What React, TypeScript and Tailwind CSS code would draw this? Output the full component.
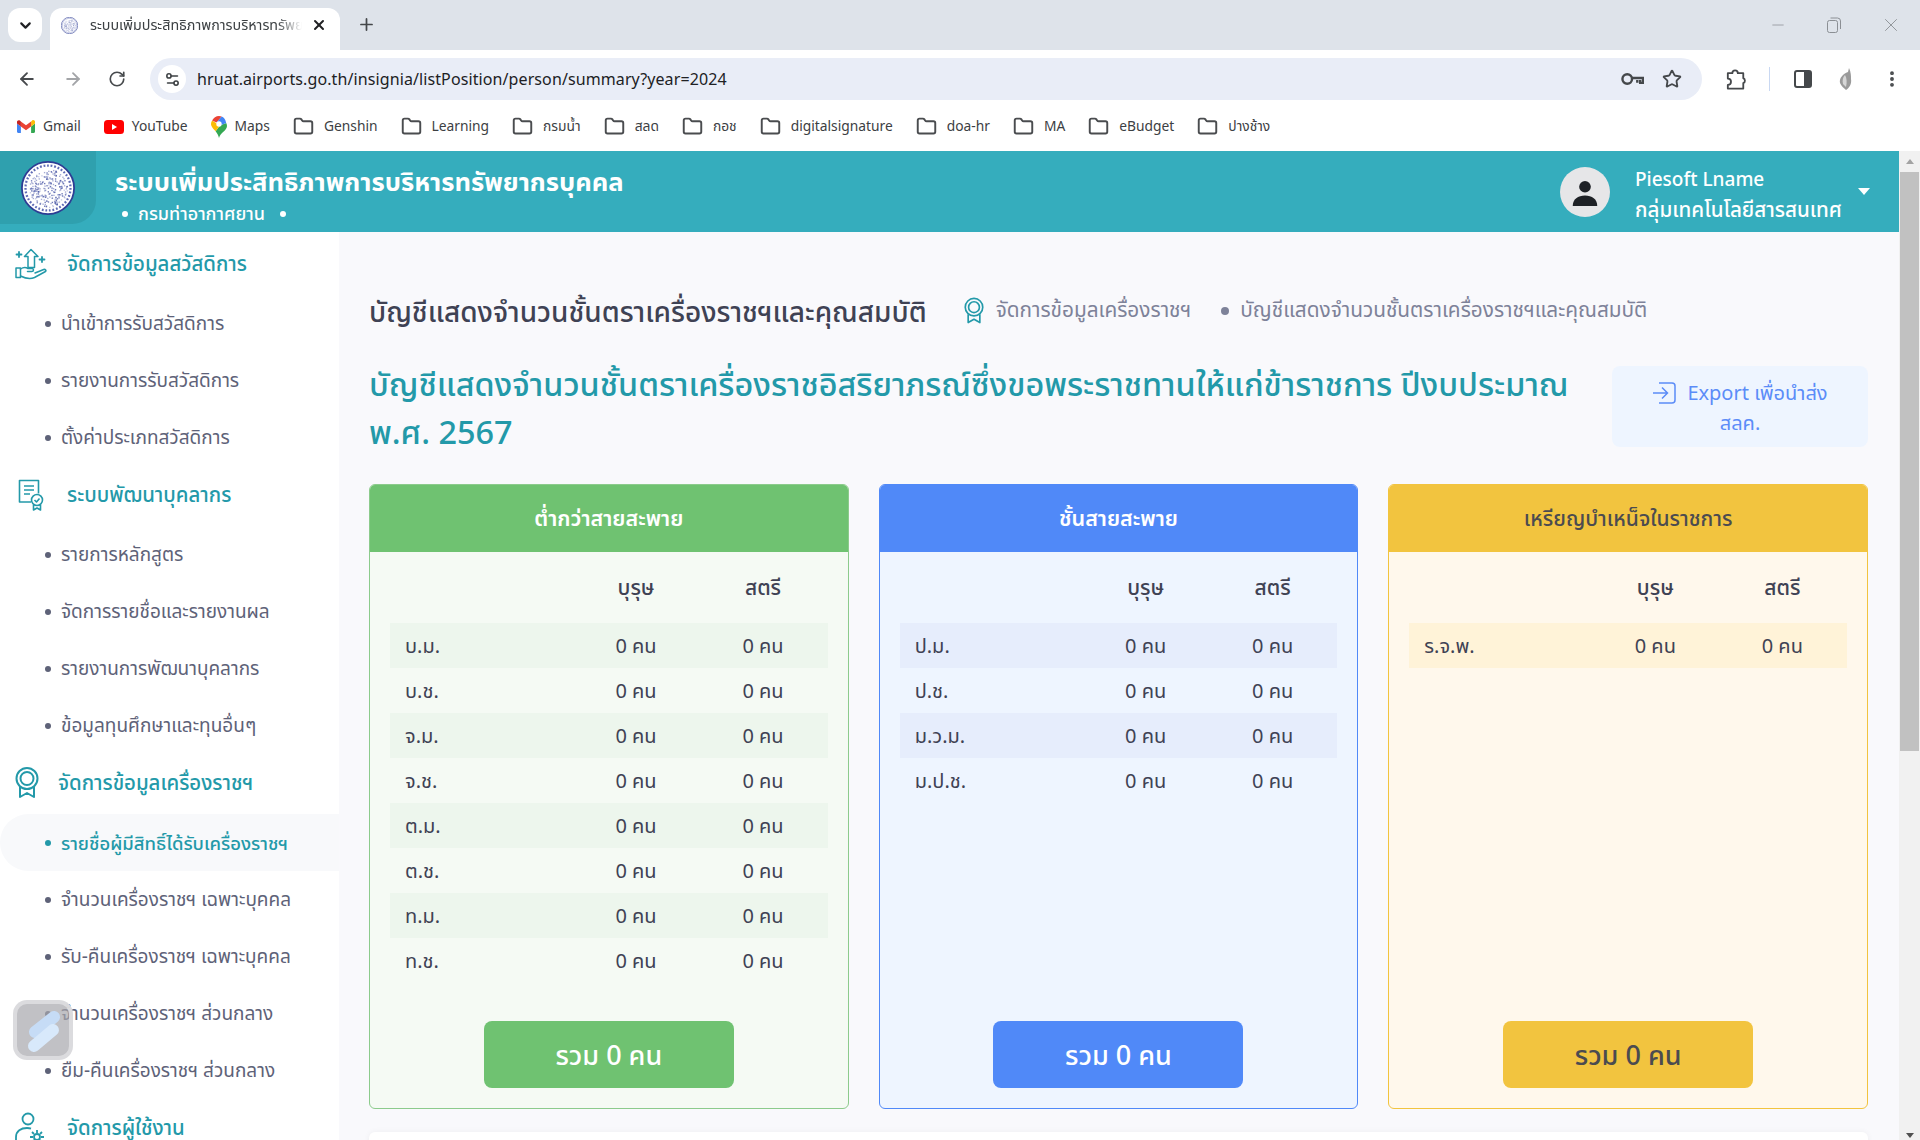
import type { ReactNode } from "react";
import {
  ArrowLeft,
  ArrowRight,
  ChevronDown,
  Folder,
  Minus,
  MoreVertical,
  Plus,
  RotateCw,
  Settings2,
  Star,
  X,
} from "lucide-react";

const TEAL = "#2399a9";

function GmailIcon() {
  return (
    <svg viewBox="0 0 24 24" className="w-[18px] h-[18px]">
      <path fill="#4285F4" d="M1.6 20h3.6v-8.8L0 7.3v11.1C0 19.3.7 20 1.6 20z" />
      <path fill="#34A853" d="M18.8 20h3.6c.9 0 1.6-.7 1.6-1.6V7.3l-5.2 3.9z" />
      <path fill="#FBBC04" d="M18.8 4.5v6.7L24 7.3V5.2c0-2-2.2-3.1-3.8-1.9z" />
      <path fill="#EA4335" d="M5.2 11.2V4.5L12 9.6l6.8-5.1v6.7L12 16.3z" />
      <path fill="#C5221F" d="M0 5.2v2.1l5.2 3.9V4.5L3.8 3.4C2.2 2.2 0 3.3 0 5.2z" />
    </svg>
  );
}

function YoutubeIcon() {
  return (
    <svg viewBox="0 0 20 14" className="w-5 h-[14px]">
      <rect width="20" height="14" rx="3.5" fill="#f00" />
      <path d="M8 4l5 3-5 3z" fill="#fff" />
    </svg>
  );
}

function MapsIcon() {
  return (
    <svg viewBox="0 0 16 22" className="w-4 h-[22px]">
      <path fill="#34A853" d="M8 22c-.6-3-2-5-3.4-6.8L9 9.5l6.2-2.6c.5 1.2.8 1.9.8 3.1 0 4.5-6.8 6.800-8 12z" />
      <path fill="#FBBC04" d="M4.600 15.200C3 13.300 0 11 0 8c0-1.300.4-2.500 1.100-3.500L9 9.500z" />
      <path fill="#EA4335" d="M1.100 4.500C2.500 1.800 5 0 8 0c1 0 1.900.2 2.700.6L5.500 6.500z" />
      <path fill="#4285F4" d="M10.700.6c2 .8 3.600 2.300 4.500 6.300L9 9.500a3 3 0 0 0-3.500-3z" />
      <circle cx="8" cy="8" r="2.700" fill="#fff" />
    </svg>
  );
}

// pseudo random 0..1 so the seal looks the same on every render
const noise = (n: number) => {
  const v = Math.sin(n * 12.9898) * 43758.5453;
  return v - Math.floor(v);
};

// วงกลมตราสัญลักษณ์ จุดเล็กๆ แทนลายในตรา
function Seal({ className }: { className: string }) {
  const dots = [];
  for (let i = 0; i < 240; i++) {
    const a = noise(i + 1) * Math.PI * 2;
    const r = 21 * Math.sqrt(noise(i + 500));
    dots.push(
      <rect
        key={i}
        x={30 + r * Math.cos(a)}
        y={30 + r * Math.sin(a)}
        width="1.500"
        height="1.500"
        fill={i % 3 === 0 ? "#8d97cc" : "#4a58a6"}
        opacity={i % 2 === 0 ? 0.5 : 0.8}
      />
    );
  }
  return (
    <svg viewBox="0 0 60 60" className={className}>
      <circle cx="30" cy="30" r="29" fill="#fff" stroke="#2e3d94" strokeWidth="2" />
      <circle cx="30" cy="30" r="25" fill="none" stroke="#5f6bb5" strokeWidth="2.500" strokeDasharray="2 2" />
      {dots}
    </svg>
  );
}

function MedalIcon({ className }: { className: string }) {
  return (
    <svg viewBox="0 0 24 31" fill="none" stroke={TEAL} strokeWidth="2" className={className}>
      <circle cx="12" cy="11.500" r="10.500" />
      <circle cx="12" cy="11.500" r="6.500" />
      <path d="M5 20v10l7-4 7 4V20" strokeLinejoin="round" />
    </svg>
  );
}

function HandIcon() {
  return (
    <svg viewBox="0 0 32 32" fill="none" stroke={TEAL} strokeWidth="1.500" strokeLinejoin="round" strokeLinecap="round" className="w-8 h-8">
      <path d="M16 1.500 9.500 8.500h3.500v11h6.500v-11H23z" />
      <path d="M1 20h4.500v9.500H1z" />
      <path d="M5.500 21c3-2 5-2 7.500-.5h4c2 0 2 3-.2 3h-4.300M5.500 28c5 2.500 10 3.200 14 1.500l11-6c1.200-1-.2-2.500-1.800-2l-8.700 3.500" />
      <path d="M4 4v5M1.500 6.500h5M27 9v5M24.500 11.500h5" strokeWidth="1.800" />
    </svg>
  );
}

function CertIcon() {
  return (
    <svg viewBox="0 0 26 32" fill="none" stroke={TEAL} strokeWidth="1.600" strokeLinejoin="round" className="ml-[3px] w-[26px] h-8">
      <path d="M13 23H1.500V1.500h19v13" />
      <path d="M6 7h10M6 11h10M6 15h6" />
      <circle cx="19" cy="21" r="5.500" />
      <path d="M16.500 21l2 2 3-3.500M15.500 26v5l3.500-2 3.500 2v-5" />
    </svg>
  );
}

function UserGearIcon() {
  return (
    <svg viewBox="0 0 30 32" fill="none" stroke={TEAL} strokeWidth="1.800" className="w-[30px] h-8">
      <circle cx="13" cy="7" r="5.500" />
      <path d="M1 31v-6c0-6 5-9 11-9 1.500 0 3 .2 4 .6" />
      <circle cx="22" cy="25" r="3" />
      <path d="M22 18v3M22 29v3M15 25h3M26 25h3M17 20l2 2M25 28l2 2M27 20l-2 2M19 28l-2 2" />
    </svg>
  );
}

const bookmarks: { label: string; icon?: ReactNode }[] = [
  { label: "Gmail", icon: <GmailIcon /> },
  { label: "YouTube", icon: <YoutubeIcon /> },
  { label: "Maps", icon: <MapsIcon /> },
  { label: "Genshin" },
  { label: "Learning" },
  { label: "กรมน้ำ" },
  { label: "สลด" },
  { label: "กอช" },
  { label: "digitalsignature" },
  { label: "doa-hr" },
  { label: "MA" },
  { label: "eBudget" },
  { label: "ปางช้าง" },
];

const menu: { title: string; icon: ReactNode; indent?: boolean; items: string[] }[] = [
  {
    title: "จัดการข้อมูลสวัสดิการ",
    icon: <HandIcon />,
    items: ["นำเข้าการรับสวัสดิการ", "รายงานการรับสวัสดิการ", "ตั้งค่าประเภทสวัสดิการ"],
  },
  {
    title: "ระบบพัฒนาบุคลากร",
    icon: <CertIcon />,
    items: ["รายการหลักสูตร", "จัดการรายชื่อและรายงานผล", "รายงานการพัฒนาบุคลากร", "ข้อมูลทุนศึกษาและทุนอื่นๆ"],
  },
  {
    title: "จัดการข้อมูลเครื่องราชฯ",
    icon: <MedalIcon className="w-6 h-[31px]" />,
    indent: true,
    items: [
      "รายชื่อผู้มีสิทธิ์ได้รับเครื่องราชฯ",
      "จำนวนเครื่องราชฯ เฉพาะบุคคล",
      "รับ-คืนเครื่องราชฯ เฉพาะบุคคล",
      "จำนวนเครื่องราชฯ ส่วนกลาง",
      "ยืม-คืนเครื่องราชฯ ส่วนกลาง",
    ],
  },
  { title: "จัดการผู้ใช้งาน", icon: <UserGearIcon />, items: [] },
];

const cards = [
  {
    title: "ต่ำกว่าสายสะพาย",
    rows: ["บ.ม.", "บ.ช.", "จ.ม.", "จ.ช.", "ต.ม.", "ต.ช.", "ท.ม.", "ท.ช."],
    head: "bg-[#6fc271] text-white text-[21.5px] font-semibold",
    body: "bg-[#f5faf4] border-[#8ccb8c]",
    stripe: "bg-[#edf6ed]",
    button: "bg-[#6fc271] text-white",
  },
  {
    title: "ชั้นสายสะพาย",
    rows: ["ป.ม.", "ป.ช.", "ม.ว.ม.", "ม.ป.ช."],
    head: "bg-[#5089f8] text-white text-[21.5px] font-semibold",
    body: "bg-[#eef5ff] border-[#5089f8]",
    stripe: "bg-[#e6edfc]",
    button: "bg-[#5089f8] text-white",
  },
  {
    title: "เหรียญบำเหน็จในราชการ",
    rows: ["ร.จ.พ."],
    head: "bg-[#f2c43f] text-[#4b4b50] text-[21px] font-medium",
    body: "bg-[#fff8ec] border-[#f2c43f]",
    stripe: "bg-[#fff3d8]",
    button: "bg-[#f2c43f] text-[#4b4b50]",
  },
];

function BrowserChrome() {
  return (
    <>
      {/* Tab strip */}
      <div className="h-[50px] bg-[#dee3ea] flex items-end pl-2 relative shrink-0">
        <div className="w-[34px] h-[34px] mb-2 bg-white rounded-xl flex items-center justify-center">
          <ChevronDown size={17} strokeWidth={3} className="text-[#202124]" />
        </div>
        <div className="ml-2 w-[290px] h-[42px] pb-[8px] bg-white rounded-t-xl flex items-center pl-[11px] pr-[13px]">
          <Seal className="w-[17px] h-[17px]" />
          <span className="ml-[12px] w-[212px] overflow-hidden whitespace-nowrap text-[14.300px] text-[#3c4043] [mask-image:linear-gradient(to_right,black_88%,transparent)]">
            ระบบเพิ่มประสิทธิภาพการบริหารทรัพยากรบุคคล
          </span>
          <X size={16} strokeWidth={3} className="ml-auto text-[#202124]" />
        </div>
        <Plus size={19} strokeWidth={2.2} className="ml-[17px] mb-[16px] text-[#44474a]" />
        <div className="ml-auto flex items-center h-full text-[#8b8f94]">
          <Minus size={18} strokeWidth={1} className="mr-[40px]" />
          <svg viewBox="0 0 14 16" fill="none" stroke="#8b8f94" className="w-[14px] h-4 mr-[39px]">
            <rect x="0.5" y="3.500" width="10" height="12" rx="2" />
            <path d="M3.500 1h7a3 3 0 0 1 3 3v8" />
          </svg>
          <X size={22} strokeWidth={1} className="mr-[18px]" />
        </div>
      </div>

      {/* Toolbar */}
      <div className="h-[50px] bg-white rounded-t-lg flex items-center pt-[8px] pl-[17px] pr-[18px] shrink-0">
        <ArrowLeft size={20} strokeWidth={2.2} className="text-[#474a4d]" />
        <ArrowRight size={20} strokeWidth={2.2} className="ml-[26px] text-[#a3a5a8]" />
        <RotateCw size={18} strokeWidth={2.2} className="ml-[25px] text-[#474a4d]" />
        <div className="ml-[24px] w-[1552px] h-[42px] bg-[#e9edf7] rounded-full flex items-center pl-2 pr-5">
          <div className="w-7 h-7 bg-white rounded-full flex items-center justify-center">
            <Settings2 size={17} strokeWidth={2.2} className="text-[#3c4043]" />
          </div>
          <span className="ml-[11px] text-[16px] text-[#202124] tracking-[0.1px]">
            hruat.airports.go.th/insignia/listPosition/person/summary?year=2024
          </span>
          <svg viewBox="0 0 24 14" fill="none" stroke="#45484b" strokeWidth="2.500" className="ml-auto w-[23px] h-[14px]">
            <circle cx="6.500" cy="7" r="5" />
            <path d="M11.500 6H23v5h-3V8m-3 0v3" />
          </svg>
          <Star size={20} strokeWidth={2.2} className="ml-[18px] text-[#45484b]" />
        </div>
        <svg viewBox="0 0 22 24" fill="none" stroke="#45484b" strokeWidth="2" strokeLinejoin="round" className="ml-[24px] w-5 h-[23px]">
          <path d="M2 5h5a3 3 0 0 1 6 0h6v5.500a3 3 0 0 1 0 5.500V22H2v-4a3 3 0 0 0 0-7z" />
        </svg>
        <div className="ml-[23px] w-px h-6 bg-[#c9d8f2]" />
        <svg viewBox="0 0 18 18" className="ml-[24px] w-[18px] h-[18px]">
          <rect x="1" y="1" width="16" height="16" rx="2" fill="#fff" stroke="#45484b" strokeWidth="2" />
          <rect x="10" y="1" width="7" height="16" fill="#45484b" />
        </svg>
        <svg viewBox="0 0 18 24" className="ml-[24px] w-[18px] h-6">
          <path d="M13 1l-1 4C7 7 3 11 4 16c1 3 4 5 6 7 3-2 6-6 5-11 0-3 0-7-2-11z" fill="#9a9a9a" />
          <path d="M9 8c-2 2-3 5-2 9l3 3c1-4 1-9-1-12z" fill="#d6d6d6" />
        </svg>
        <MoreVertical size={20} strokeWidth={2.6} className="ml-auto text-[#45484b]" />
      </div>

      {/* Bookmarks */}
      <div className="h-[51px] pt-[2px] bg-white flex items-center pl-[17px] gap-[23px] shrink-0 text-[13.800px] text-[#3c4043]">
        {bookmarks.map((b) => (
          <div key={b.label} className={`flex items-center ${b.icon ? "gap-[8px]" : "gap-[10px]"}`}>
            {b.icon ?? <Folder size={21} strokeWidth={2.2} className="text-[#4a4c4f]" />}
            <span>{b.label}</span>
          </div>
        ))}
      </div>
    </>
  );
}

function Sidebar() {
  return (
    <aside className="w-[339px] shrink-0 bg-white pt-[3px] shadow-[0_0_10px_rgba(0,0,0,0.06)] overflow-hidden">
      {menu.map((group) => (
        <div key={group.title}>
          <div className="h-[60px] pb-[3px] flex items-center pl-[15px]">
            <div className={group.indent ? "w-[43px]" : "w-[52px]"}>{group.icon}</div>
            <span className="text-[20.400px] font-medium text-[#2399a9]">{group.title}</span>
          </div>
          {group.items.map((item) => {
            const active = item === "รายชื่อผู้มีสิทธิ์ได้รับเครื่องราชฯ";
            return (
              <div
                key={item}
                className={`h-[57px] flex items-center pl-[45px] rounded-l-[30px] ${
                  active ? "text-[18.500px] bg-[#f8f9fb] text-[#2399a9] font-medium" : "text-[19px] text-[#5e6278]"
                }`}
              >
                <span className={`w-[6px] h-[6px] rounded-full mr-[10px] ${active ? "bg-[#2399a9]" : "bg-[#5e6278]"}`} />
                {item}
              </div>
            );
          })}
        </div>
      ))}
    </aside>
  );
}

function SummaryCard({ card }: { card: (typeof cards)[number] }) {
  return (
    <div className={`h-[625px] rounded-md border flex flex-col overflow-hidden ${card.body}`}>
      <div className={`h-[67px] shrink-0 flex items-center justify-center ${card.head}`}>{card.title}</div>
      <div className="flex-1 px-5 text-[#3f4254]">
        <div className="h-[71px] grid grid-cols-[183px_126px_128px] items-center text-center text-[21px] font-medium">
          <span />
          <span>บุรุษ</span>
          <span>สตรี</span>
        </div>
        {card.rows.map((row, i) => (
          <div
            key={row}
            className={`h-[45px] grid grid-cols-[183px_126px_128px] items-center text-center text-[20px] ${
              i % 2 === 0 ? card.stripe : ""
            }`}
          >
            <span className="text-left pl-[15px]">{row}</span>
            <span>0 คน</span>
            <span>0 คน</span>
          </div>
        ))}
      </div>
      <div className={`mx-auto mb-5 w-[250px] h-[67px] pt-[2px] shrink-0 rounded-lg flex items-center justify-center text-[27px] font-medium ${card.button}`}>
        รวม 0 คน
      </div>
    </div>
  );
}

export default function App() {
  return (
    <div className="w-[1920px] h-[1140px] overflow-hidden flex flex-col relative bg-white font-['Noto_Sans','Noto_Sans_Thai','Noto_Sans_CJK_SC',sans-serif]">
      <BrowserChrome />

      <div className="flex-1 flex min-h-0">
        <div className="w-[1899px] flex flex-col min-h-0">
          {/* Page header */}
          <header className="h-[81px] shrink-0 bg-[#35adbd] flex items-stretch relative z-10">
            <div className="w-[96px] h-[73px] bg-[#2fa0ae] rounded-br-[24px] flex items-center justify-center">
              <Seal className="w-[54px] h-[54px]" />
            </div>
            <div className="ml-[19px] text-white pt-[12px]">
              <div className="text-[25.600px] leading-[38px] font-bold">ระบบเพิ่มประสิทธิภาพการบริหารทรัพยากรบุคคล</div>
              <div className="flex items-center text-[18px] leading-[25px] font-medium pl-[7px]">
                <span className="w-[6px] h-[6px] bg-white rounded-full mr-[10px]" />
                กรมท่าอากาศยาน
                <span className="w-[6px] h-[6px] bg-white rounded-full ml-[15px]" />
              </div>
            </div>
            <div className="ml-auto flex items-center pr-[29px]">
              <div className="w-[50px] h-[50px] rounded-full bg-[#e6e6e8] flex items-center justify-center">
                <svg viewBox="0 0 24 24" className="w-7 h-7" fill="#1e2126">
                  <circle cx="12" cy="7.500" r="5" />
                  <path d="M1.500 24c0-6 4.500-9 10.500-9s10.500 3 10.500 9z" />
                </svg>
              </div>
              <div className="ml-[25px] pt-[4px] text-white leading-[30px] font-medium">
                <div className="text-[19px]">Piesoft Lname</div>
                <div className="text-[20.600px]">กลุ่มเทคโนโลยีสารสนเทศ</div>
              </div>
              <div className="ml-[16px] w-0 h-0 border-x-[6px] border-x-transparent border-t-[7px] border-t-white" />
            </div>
          </header>

          <div className="flex-1 flex min-h-0">
            <Sidebar />

            {/* Main content */}
            <main className="flex-1 bg-[#f9f9fc] pl-[30px] pr-[31px] pt-[49px] overflow-hidden">
              <div className="h-[59px] flex items-center">
                <h1 className="text-[28px] font-medium text-[#3f4254]">บัญชีแสดงจำนวนชั้นตราเครื่องราชฯและคุณสมบัติ</h1>
                <MedalIcon className="ml-[37px] w-5 h-[27px]" />
                <span className="ml-3 pb-[2px] text-[20.800px] text-[#7e8299]">จัดการข้อมูลเครื่องราชฯ</span>
                <span className="ml-[30px] w-2 h-2 rounded-full bg-[#7e8299]" />
                <span className="ml-[11px] pb-[2px] text-[20.800px] text-[#7e8299]">บัญชีแสดงจำนวนชั้นตราเครื่องราชฯและคุณสมบัติ</span>
              </div>

              <div className="mt-[19px] flex items-start">
                <h2 className="flex-1 text-[32.400px] leading-[48px] font-medium text-[#2399a9] pr-[30px]">
                  บัญชีแสดงจำนวนชั้นตราเครื่องราชอิสริยาภรณ์ซึ่งขอพระราชทานให้แก่ข้าราชการ ปีงบประมาณ พ.ศ. 2567
                </h2>
                <div className="mt-[7px] w-[256px] h-[81px] shrink-0 rounded-lg bg-[#eef5ff] text-[#5b8cf8] text-[20px] leading-[30px] text-center pt-[12px]">
                  <svg viewBox="0 0 24 24" fill="none" stroke="#5b8cf8" strokeWidth="1.500" className="inline-block w-6 h-6 mr-[11px] align-[-5px]">
                    <path d="M7 2h13a3 3 0 0 1 3 3v14a3 3 0 0 1-3 3H7" />
                    <path d="M1 12h14M10 6.500l5.500 5.500-5.500 5.500" />
                  </svg>
                  Export เพื่อนำส่ง
                  <br />
                  สลค.
                </div>
              </div>

              <div className="mt-[29px] grid grid-cols-3 gap-[30px]">
                {cards.map((card) => (
                  <SummaryCard key={card.title} card={card} />
                ))}
              </div>

              <div className="mt-[23px] h-20 bg-white rounded-md shadow-[0_0_6px_rgba(0,0,0,0.05)]" />
            </main>
          </div>
        </div>

        {/* Scrollbar */}
        <div className="w-[21px] shrink-0 bg-[#f1f1f1] flex flex-col items-center relative">
          <div className="mt-[8px] w-0 h-0 border-x-[4px] border-x-transparent border-b-[5px] border-b-[#a3a3a3]" />
          <div className="mt-[8px] w-[19px] h-[579px] bg-[#c1c1c1]" />
          <div className="mt-auto mb-[2px] w-0 h-0 border-x-[4px] border-x-transparent border-t-[5px] border-t-[#505050]" />
        </div>
      </div>

      {/* Floating widget */}
      <div className="absolute left-[13px] top-[1000px] w-[60px] h-[60px] rounded-[14px] border-[4px] border-[#dfdfe1]/90 bg-[#a6a6ac]/70">
        <svg viewBox="0 0 52 52" className="w-[52px] h-[52px]">
          <line x1="18" y1="28" x2="37" y2="13" stroke="#c6dcf6" strokeWidth="12" strokeLinecap="round" />
          <line x1="17" y1="42" x2="36" y2="26" stroke="#d8e9fb" strokeWidth="12" strokeLinecap="round" />
        </svg>
      </div>
    </div>
  );
}
